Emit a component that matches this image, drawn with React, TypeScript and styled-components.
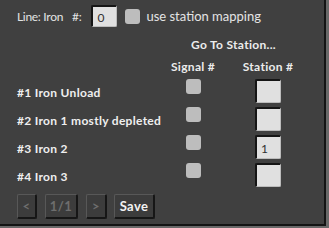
import { Fragment } from "react";
import styled, { createGlobalStyle } from "styled-components";

const GlobalStyle = createGlobalStyle`
  html, body {
    margin: 0;
    padding: 0;
    background-color: #696969;
  }
  * {
    box-sizing: border-box;
  }
`;

const Panel = styled.div`
  width: 326px;
  height: 226px;
  background-color: #404040;
  border-right: 2px solid #141414;
  border-bottom: 2px solid #141414;
  padding: 5px 0px 0px 17px;
  display: flex;
  flex-direction: column;
  font-family: Lato, "Open Sans", sans-serif;
  color: #e6e6e6;
`;

const TopRow = styled.div`
  display: flex;
  flex-direction: row;
  align-items: center;
  height: 22px;
`;

const LightText = styled.span<{ $small?: boolean }>`
  font-size: ${({ $small }) => ($small ? "12px" : "13px")};
  letter-spacing: ${({ $small }) => ($small ? "-0.3px" : "0px")};
  color: #e4e4e4;
  white-space: pre;
`;

const NumberBox = styled.div<{ $h?: number }>`
  width: 26px;
  height: ${({ $h }) => $h ?? 24}px;
  background-color: #e0e0e0;
  border-top: 2px solid #151515;
  border-left: 2px solid #151515;
  border-right: 1px solid #bcbcbc;
  border-bottom: 1px solid #bcbcbc;
  border-radius: 2px;
  display: flex;
  align-items: center;
  padding-left: 4px;
  padding-top: 2px;
  font-size: 12px;
  color: #303030;
`;

const Check = styled.div`
  width: 15px;
  height: 15px;
  border-radius: 3px;
  background-color: #bdbdbd;
`;

const HeadText = styled.span`
  font-size: 12px;
  font-weight: bold;
  color: #ececec;
  letter-spacing: 0.3px;
  line-height: 16px;
  white-space: nowrap;
`;

const GoToRow = styled.div`
  margin-top: 10px;
  padding-left: 174px;
  height: 16px;
  display: flex;
`;

const ColumnHeads = styled.div`
  margin-top: 6px;
  height: 16px;
  display: grid;
  grid-template-columns: 155px 42px 108px;
`;

const HeaderCell = styled.div`
  display: flex;
  justify-content: center;
`;

const Grid = styled.div`
  margin-top: 4px;
  display: grid;
  grid-template-columns: 155px 42px 108px;
  grid-auto-rows: 24px;
  row-gap: 4px;
`;

const LabelCell = styled.div`
  display: flex;
  align-items: center;
  padding-top: 2px;
  font-size: 12px;
  font-weight: bold;
  letter-spacing: 0.3px;
  color: #efefef;
  white-space: nowrap;
`;

const CenterCell = styled.div`
  display: flex;
  justify-content: center;
  align-items: flex-start;
`;

const ButtonRow = styled.div`
  margin-top: 7px;
  display: flex;
  flex-direction: row;
  gap: 7px;
`;

const FrameButton = styled.div<{ $w: number; $disabled?: boolean }>`
  width: ${({ $w }) => $w}px;
  height: 25px;
  background-color: #3c3c3c;
  border-top: 1px solid #585858;
  border-left: 1px solid #585858;
  border-right: 2px solid #161616;
  border-bottom: 2px solid #161616;
  border-radius: 2px;
  display: flex;
  align-items: center;
  justify-content: center;
  font-size: 13px;
  font-weight: bold;
  letter-spacing: 0.4px;
  color: ${({ $disabled }) => ($disabled ? "#6e6e6e" : "#f2f2f2")};
`;

const rows = [
  { label: "#1 Iron Unload", station: "" },
  { label: "#2 Iron 1 mostly depleted", station: "" },
  { label: "#3 Iron 2", station: "1" },
  { label: "#4 Iron 3", station: "" },
];

export default function App() {
  return (
    <>
      <GlobalStyle />
      <Panel>
        <TopRow>
          <LightText $small>Line: Iron</LightText>
          <LightText $small style={{ marginLeft: 9 }}>
            #:
          </LightText>
          <NumberBox $h={22} style={{ marginLeft: 10 }}>
            0
          </NumberBox>
          <Check style={{ marginLeft: 8 }} />
          <LightText style={{ marginLeft: 6 }}>use station mapping</LightText>
        </TopRow>
        <GoToRow>
          <HeadText>Go To Station...</HeadText>
        </GoToRow>
        <ColumnHeads>
          <div />
          <HeaderCell>
            <HeadText>Signal #</HeadText>
          </HeaderCell>
          <HeaderCell>
            <HeadText>Station #</HeadText>
          </HeaderCell>
        </ColumnHeads>
        <Grid>
          {rows.map((r) => (
            <Fragment key={r.label}>
              <LabelCell>{r.label}</LabelCell>
              <CenterCell>
                <Check />
              </CenterCell>
              <CenterCell>
                <NumberBox>{r.station}</NumberBox>
              </CenterCell>
            </Fragment>
          ))}
        </Grid>
        <ButtonRow>
          <FrameButton $w={20} $disabled>
            &lt;
          </FrameButton>
          <FrameButton $w={33} $disabled style={{ marginLeft: 1 }}>
            1/1
          </FrameButton>
          <FrameButton $w={21} $disabled style={{ marginLeft: 1 }}>
            &gt;
          </FrameButton>
          <FrameButton $w={41}>Save</FrameButton>
        </ButtonRow>
      </Panel>
    </>
  );
}
